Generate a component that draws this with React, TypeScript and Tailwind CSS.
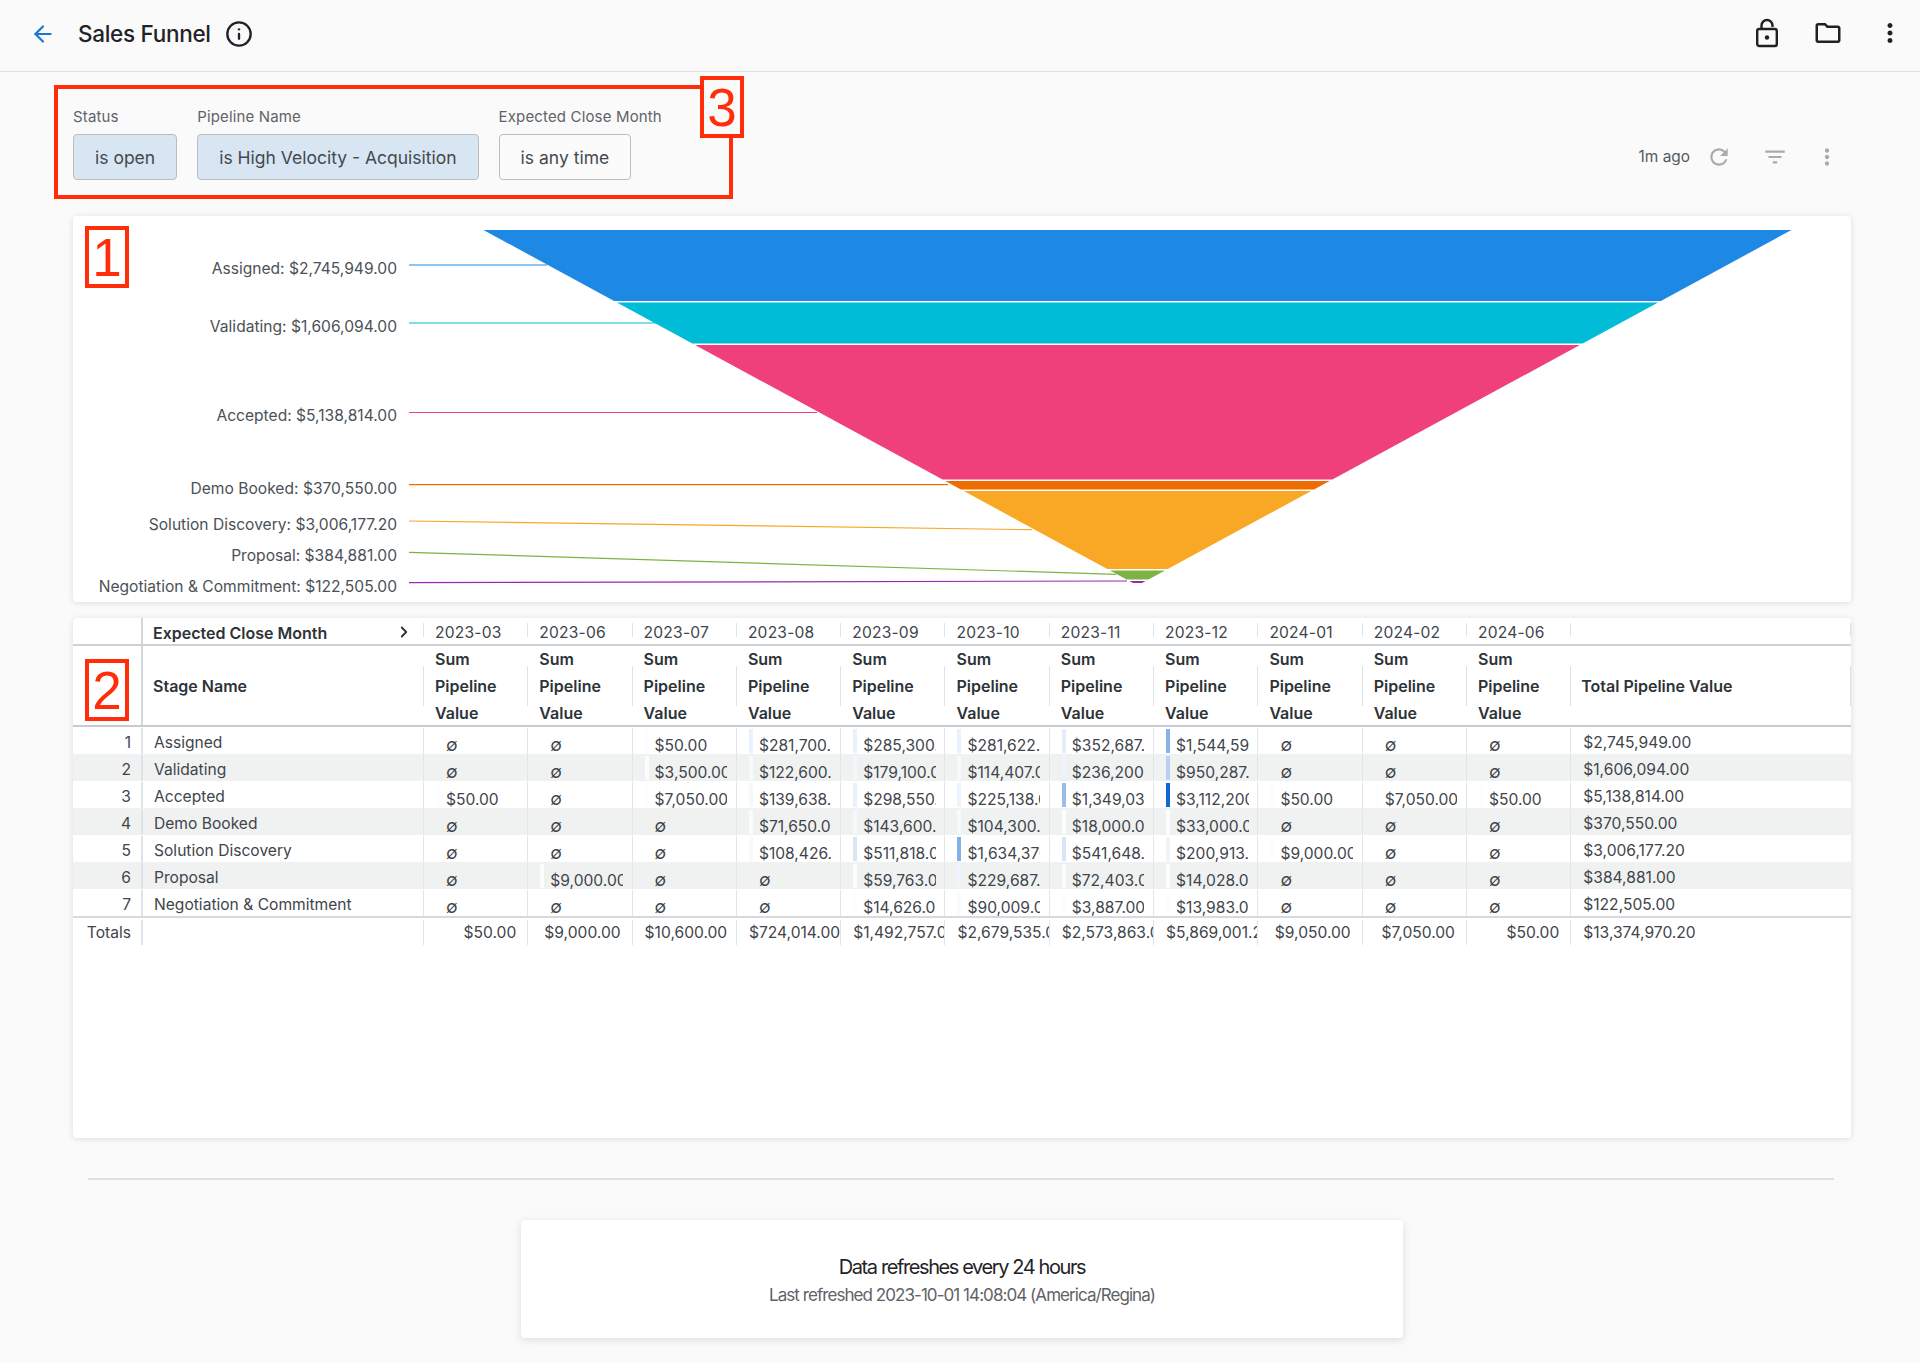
import { ArrowLeft, ChevronRight, Info } from "lucide-react";
import { MdFilterList, MdMoreVert, MdOutlineFolder, MdRefresh } from "react-icons/md";

const months = [
  "2023-03",
  "2023-06",
  "2023-07",
  "2023-08",
  "2023-09",
  "2023-10",
  "2023-11",
  "2023-12",
  "2024-01",
  "2024-02",
  "2024-06",
];

const _ = null;

const rows: { name: string; total: string; values: (number | null)[] }[] = [
  { name: "Assigned", total: "$2,745,949.00", values: [_, _, 50, 281700, 285300, 281622, 352687, 1544590, _, _, _] },
  { name: "Validating", total: "$1,606,094.00", values: [_, _, 3500, 122600, 179100, 114407, 236200, 950287, _, _, _] },
  { name: "Accepted", total: "$5,138,814.00", values: [50, _, 7050, 139638, 298550, 225138, 1349030, 3112200, 50, 7050, 50] },
  { name: "Demo Booked", total: "$370,550.00", values: [_, _, _, 71650, 143600, 104300, 18000, 33000, _, _, _] },
  { name: "Solution Discovery", total: "$3,006,177.20", values: [_, _, _, 108426, 511818, 1634370, 541648, 200913, 9000, _, _] },
  { name: "Proposal", total: "$384,881.00", values: [_, 9000, _, _, 59763, 229687, 72403, 14028, _, _, _] },
  { name: "Negotiation & Commitment", total: "$122,505.00", values: [_, _, _, _, 14626, 90009, 3887, 13983, _, _, _] },
];

const totals = [
  "$50.00",
  "$9,000.00",
  "$10,600.00",
  "$724,014.00",
  "$1,492,757.00",
  "$2,679,535.00",
  "$2,573,863.00",
  "$5,869,001.20",
  "$9,050.00",
  "$7,050.00",
  "$50.00",
];

const MAX_VALUE = 3112200;

const money = (v: number) =>
  "$" + v.toLocaleString("en-US", { minimumFractionDigits: 2, maximumFractionDigits: 2 });

// edge of the funnel: half width for a given y, in page coordinates
const CX = 1137.5;
const halfAt = (y: number) => Math.max(0, 654 - 1.84 * (y - 230));
const slice = (top: number, bottom: number) => {
  const a = halfAt(top);
  const b = halfAt(bottom);
  return `${CX - a},${top} ${CX + a},${top} ${CX + b},${bottom} ${CX - b},${bottom}`;
};

const segments = [
  { top: 230, bottom: 301, fill: "#1e88e5" },
  { top: 302.5, bottom: 343.5, fill: "#00bcd6" },
  { top: 345, bottom: 479.5, fill: "#f0407c" },
  { top: 481, bottom: 489.5, fill: "#ef6c00" },
  { top: 491, bottom: 569, fill: "#f9a825" },
  { top: 570.5, bottom: 579.5, fill: "#7cb342" },
  { top: 581, bottom: 583, fill: "#9c27b0" },
];

const labels = [
  { text: "Assigned: $2,745,949.00", y: 268.5, line: "409,265 547,265", stroke: "#1e88e5" },
  { text: "Validating: $1,606,094.00", y: 326.5, line: "409,323 655,323", stroke: "#00bcd6" },
  { text: "Accepted: $5,138,814.00", y: 415.5, line: "409,412.5 817,412.5", stroke: "#f0407c" },
  { text: "Demo Booked: $370,550.00", y: 488.5, line: "409,484.7 948,484.7", stroke: "#ef6c00" },
  { text: "Solution Discovery: $3,006,177.20", y: 525, line: "409,521 1032,529.7", stroke: "#f9a825" },
  { text: "Proposal: $384,881.00", y: 555.5, line: "409,552.3 1116,574.3", stroke: "#7cb342" },
  { text: "Negotiation & Commitment: $122,505.00", y: 587, line: "409,582.7 1127,581", stroke: "#9c27b0" },
];

function Callout({ n, className }: { n: string; className: string }) {
  return (
    <div
      className={
        "absolute w-[44px] h-[62px] border-[4px] border-[#ff2d0a] flex items-center justify-center text-[53px] leading-none text-[#ff2d0a] font-['Liberation_Sans',sans-serif] " +
        className
      }
    >
      {n}
    </div>
  );
}

function FilterChip({ label, value, active }: { label: string; value: string; active?: boolean }) {
  return (
    <div className="flex flex-col items-start">
      <span className="text-[15px] tracking-[0.15px] leading-[18px] text-[#5f6368] mb-[8px] pt-[1px]">{label}</span>
      <button
        className={
          "h-[46px] px-[21px] pt-[2px] rounded-[4px] border border-[#bdbdbd] text-[17.5px] text-[#44494e] text-left " +
          (active ? "bg-[#d8e5f2]" : "bg-[#fbfbfb]")
        }
      >
        {value}
      </button>
    </div>
  );
}

function Chart() {
  return (
    <svg viewBox="73 216 1778 386" className="block w-full h-full">
      {labels.map((l) => (
        <polyline key={l.text} points={l.line} fill="none" stroke={l.stroke} strokeWidth={1.2} />
      ))}
      {segments.map((s) => (
        <polygon key={s.fill} points={slice(s.top, s.bottom)} fill={s.fill} />
      ))}
      {labels.map((l) => (
        <text key={l.text} x={397} y={l.y} dy="0.35em" textAnchor="end" fontSize={15.6} fill="#4b5157" fontFamily="Inter, sans-serif">
          {l.text}
        </text>
      ))}
    </svg>
  );
}

function PivotTable() {
  return (
    <div className="text-[15.6px] text-[#3f454b]">
      {/* column header */}
      <div className="flex h-[28px] border-b-2 border-[#cdd2d6]">
        <div className="w-[70px] border-r-2 border-[#d3d8dc]" />
        <div className="w-[280px] pl-[10px] pr-[10px] flex items-center justify-between text-[16px] font-semibold text-[#2e3338] pt-[3px]">
          Expected Close Month
          <ChevronRight size={18} strokeWidth={2.4} className="text-[#2e3338] -mt-[1px]" />
        </div>
        {months.map((m) => (
          <div key={m} className="w-[104.3px] flex items-center">
            <span className="h-[14px] border-l border-[#dfe3e6] -mt-[2px]" />
            <span className="pl-[11px] tracking-[0.2px] pt-[4px]">{m}</span>
          </div>
        ))}
        <div className="flex-1 flex items-center justify-between -mt-[2px]">
          <span className="h-[14px] border-l border-[#dfe3e6]" />
          <span className="h-[14px] border-r border-[#dfe3e6]" />
        </div>
      </div>

      <div className="flex h-[81px] border-b-2 border-[#c5cbd0] font-semibold text-[16px] text-[#2e3338]">
        <div className="w-[70px] border-r-2 border-[#d3d8dc]" />
        <div className="w-[280px] pl-[10px] flex items-center pt-[1px]">Stage Name</div>
        {months.map((m) => (
          <div key={m} className="w-[104.3px] flex items-center">
            <span className="h-[40px] border-l border-[#dfe3e6]" />
            <span className="pl-[11px] leading-[27px] pt-[2px]">
              Sum
              <br />
              Pipeline
              <br />
              Value
            </span>
          </div>
        ))}
        <div className="flex-1 flex items-center justify-between">
          <span className="h-[40px] border-l border-[#dfe3e6]" />
          <span className="flex-1 pl-[10px] pt-[1px]">Total Pipeline Value</span>
          <span className="h-[40px] border-r border-[#dfe3e6]" />
        </div>
      </div>

      {/* body */}
      {rows.map((row, i) => (
        <div key={row.name} className={"flex h-[27px] items-end " + (i % 2 === 1 ? "bg-[#f0f2f2]" : "bg-white")}>
          <div className="w-[70px] h-[26px] border-r-2 border-[#dfe3e6] text-right pr-[10px] leading-[30px]">{i + 1}</div>
          <div className="w-[280px] h-[26px] pl-[11px] leading-[30px]">{row.name}</div>
          {row.values.map((v, j) => (
            <div key={j} className="relative w-[104.3px] h-[26px] border-l border-[#e2e5e7]">
              {v !== null && (
                <span
                  className="absolute left-[12px] top-[1px] bottom-[1px] w-[4px] bg-white"
                  style={{ boxShadow: `inset 0 0 0 4px rgba(19,104,208,${Math.max(0.015, v / MAX_VALUE).toFixed(3)})` }}
                />
              )}
              <div className="ml-[22px] w-[72.5px] overflow-hidden whitespace-nowrap leading-[35px]">
                {v === null ? <span className="text-[17px]">∅</span> : money(v)}
              </div>
            </div>
          ))}
          <div className="flex-1 h-[26px] border-l border-[#e2e5e7] pl-[12px] leading-[30px]">{row.total}</div>
        </div>
      ))}

      {/* totals */}
      <div className="flex h-[29px] items-end border-t-2 border-[#d6dadd] leading-[25px]">
        <div className="w-[70px] h-[25px] border-r-2 border-[#dfe3e6] text-right pr-[10px]">Totals</div>
        <div className="w-[280px] h-[25px]" />
        {totals.map((t, j) => (
          <div key={j} className="w-[104.3px] h-[25px] border-l border-[#e2e5e7] pl-[12px] pr-[11px] text-right whitespace-nowrap overflow-hidden">
            {t}
          </div>
        ))}
        <div className="flex-1 h-[25px] border-l border-[#e2e5e7] pl-[12px]">$13,374,970.20</div>
      </div>
    </div>
  );
}

export default function App() {
  return (
    <div className="relative min-h-[1363px] bg-[#fafafa] font-['Inter',sans-serif] overflow-hidden">
      <header className="h-[72px] border-b border-[#e0e0e0] flex items-center pl-[30px] pr-[15px] pb-[4px]">
        <ArrowLeft size={26} strokeWidth={2} className="text-[#1976d2]" />
        <h1 className="ml-[22px] text-[22.5px] font-medium text-[#1f2328] tracking-[-0.3px]">Sales Funnel</h1>
        <Info size={28} strokeWidth={2} className="ml-[14px] text-[#1f2328]" />
        <div className="ml-auto flex items-center -mt-[2px]">
          <svg width="24" height="30" viewBox="0 0 24 30" fill="none" stroke="#212121" strokeWidth="2.4">
            <rect x="2.2" y="11" width="19.6" height="17" rx="2" />
            <path d="M6.5 11V7.5a5.5 5.5 0 0 1 11 0V9" />
            <circle cx="12" cy="19.5" r="2.2" fill="#212121" stroke="none" />
          </svg>
          <MdOutlineFolder size={30} className="ml-[34px] text-[#212121]" />
          <MdMoreVert size={30} className="ml-[32px] text-[#212121]" />
        </div>
      </header>

      <div className="h-[144px] pl-[73px] pr-[80px] flex items-end justify-between pb-[36px]">
        <div className="flex gap-[20px]">
          <FilterChip label="Status" value="is open" active />
          <FilterChip label="Pipeline Name" value="is High Velocity - Acquisition" active />
          <FilterChip label="Expected Close Month" value="is any time" />
        </div>
        <div className="flex items-center h-[46px] text-[15.4px] text-[#54595e]">
          1m ago
          <MdRefresh size={26} className="ml-[16px] text-[#a8abae]" />
          <MdFilterList size={26} className="ml-[30px] text-[#a8abae]" />
          <MdMoreVert size={26} className="ml-[26px] text-[#a8abae]" />
        </div>
      </div>

      <section className="relative mx-[73px] w-[1778px] h-[386px] bg-white rounded-[4px] shadow-[0_1px_6px_rgba(0,0,0,0.12)]">
        <Chart />
        <Callout n="1" className="left-[12px] top-[10px]" />
      </section>

      <section className="relative mt-[16px] mx-[73px] w-[1778px] h-[520px] bg-white rounded-[4px] shadow-[0_1px_6px_rgba(0,0,0,0.12)]">
        <PivotTable />
        <Callout n="2" className="left-[12px] top-[41px] h-[60px]" />
      </section>

      <div className="mt-[40px] ml-[88px] w-[1746px] h-[2px] bg-[#e0e0e0]" />

      <div className="mt-[40px] ml-[521px] w-[882px] h-[118px] bg-white rounded-[4px] shadow-[0_2px_8px_rgba(0,0,0,0.12)] flex flex-col items-center pt-[34px]">
        <p className="text-[20px] leading-[26px] text-[#1f2328] tracking-[-1.4px]">Data refreshes every 24 hours</p>
        <p className="mt-[3px] text-[17px] leading-[24px] text-[#5f6368] tracking-[-0.94px]">
          Last refreshed 2023-10-01 14:08:04 (America/Regina)
        </p>
      </div>

      {/* annotation over the filter row */}
      <div className="absolute left-[54px] top-[85px] w-[679px] h-[114px] border-[4px] border-[#ff2d0a]" />
      <Callout n="3" className="left-[700px] top-[76px] bg-[#fafafa]" />
    </div>
  );
}
